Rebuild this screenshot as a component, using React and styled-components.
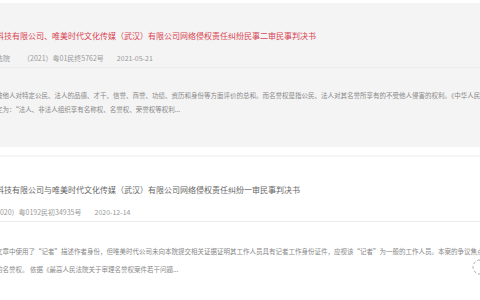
import React from 'react'
import styled, { createGlobalStyle } from 'styled-components'

const GlobalStyle = createGlobalStyle`
  html, body {
    margin: 0;
    padding: 0;
    background: #fff;
    overflow: hidden;
  }
  body {
    font-family: "Noto Sans CJK SC", "Noto Sans", sans-serif;
  }
`

const Pagina = styled.div`
  position: relative;
  width: 480px;
  height: 300px;
  overflow: hidden;
  padding-top: 3px;
  box-sizing: border-box;
`

const Lista = styled.div`
  margin-left: -4px;
  width: 520px;
`

const Cartao = styled.div`
  background: ${(props) => (props.ativo ? '#f4f4f4' : '#fff')};
  border-top: ${(props) => (props.ativo ? 'none' : '2px solid #f6f6f6')};
  margin-top: ${(props) => (props.ativo ? '0' : '8px')};
  padding: 27px 0 31px 0;
`

const Titulo = styled.div`
  font-size: 8px;
  line-height: 12px;
  color: ${(props) => (props.ativo ? '#d94352' : '#666')};
  white-space: nowrap;
`

const Meta = styled.div`
  display: flex;
  gap: 13px;
  margin-top: 11px;
  font-size: 7px;
  line-height: 10px;
  color: #999;
  white-space: nowrap;
`

const Divisor = styled.div`
  height: 1px;
  background: #ebebeb;
  margin-top: 4px;
`

const Resumo = styled.div`
  margin-top: ${(props) => props.topo}px;
  font-size: 6.5px;
  line-height: ${(props) => props.altura}px;
  color: #888;
`

const Linha = styled.div`
  white-space: nowrap;
  overflow: hidden;
`

const Carregando = styled.svg`
  position: absolute;
  right: -9px;
  top: 258px;
`

const casos = [
  {
    id: 1,
    ativo: true,
    titulo: '科技有限公司、唯美时代文化传媒（武汉）有限公司网络侵权责任纠纷民事二审民事判决书',
    meta: ['法院', '（2021）粤01民终5762号', '2021-05-21'],
    linhas: [
      '被他人对特定公民、法人的品德、才干、信誉、商誉、功绩、资历和身份等方面评价的总和。而名誉权是指公民、法人对其名誉所享有的不受他人侵害的权利。《中华人民共和国',
      '定为：“法人、非法人组织享有名称权、名誉权、荣誉权等权利...'
    ],
    topo: 20,
    altura: 14
  },
  {
    id: 2,
    ativo: false,
    titulo: '科技有限公司与唯美时代文化传媒（武汉）有限公司网络侵权责任纠纷一审民事判决书',
    meta: ['2020）粤0192民初34935号', '2020-12-14'],
    linhas: [
      '文章中使用了“记者”描述作者身份，但唯美时代公司未向本院提交相关证据证明其工作人员具有记者工作身份证件，应视该“记者”为一般的工作人员。本案的争议焦点',
      '的名誉权。 依据《最高人民法院关于审理名誉权案件若干问题...'
    ],
    topo: 20,
    altura: 18
  }
]

export default function App() {
  return (
    <Pagina>
      <GlobalStyle />
      <Lista>
        {casos.map((caso) => (
          <Cartao key={caso.id} ativo={caso.ativo}>
            <Titulo ativo={caso.ativo}>{caso.titulo}</Titulo>
            <Meta>
              {caso.meta.map((m) => (
                <span key={m}>{m}</span>
              ))}
            </Meta>
            <Divisor />
            <Resumo topo={caso.topo} altura={caso.altura}>
              {caso.linhas.map((l) => (
                <Linha key={l}>{l}</Linha>
              ))}
            </Resumo>
          </Cartao>
        ))}
      </Lista>
      <Carregando width="18" height="18" viewBox="0 0 18 18">
        <circle cx="9" cy="9" r="7" fill="none" stroke="#aaa" strokeWidth="1" strokeDasharray="3 2" />
      </Carregando>
    </Pagina>
  )
}
